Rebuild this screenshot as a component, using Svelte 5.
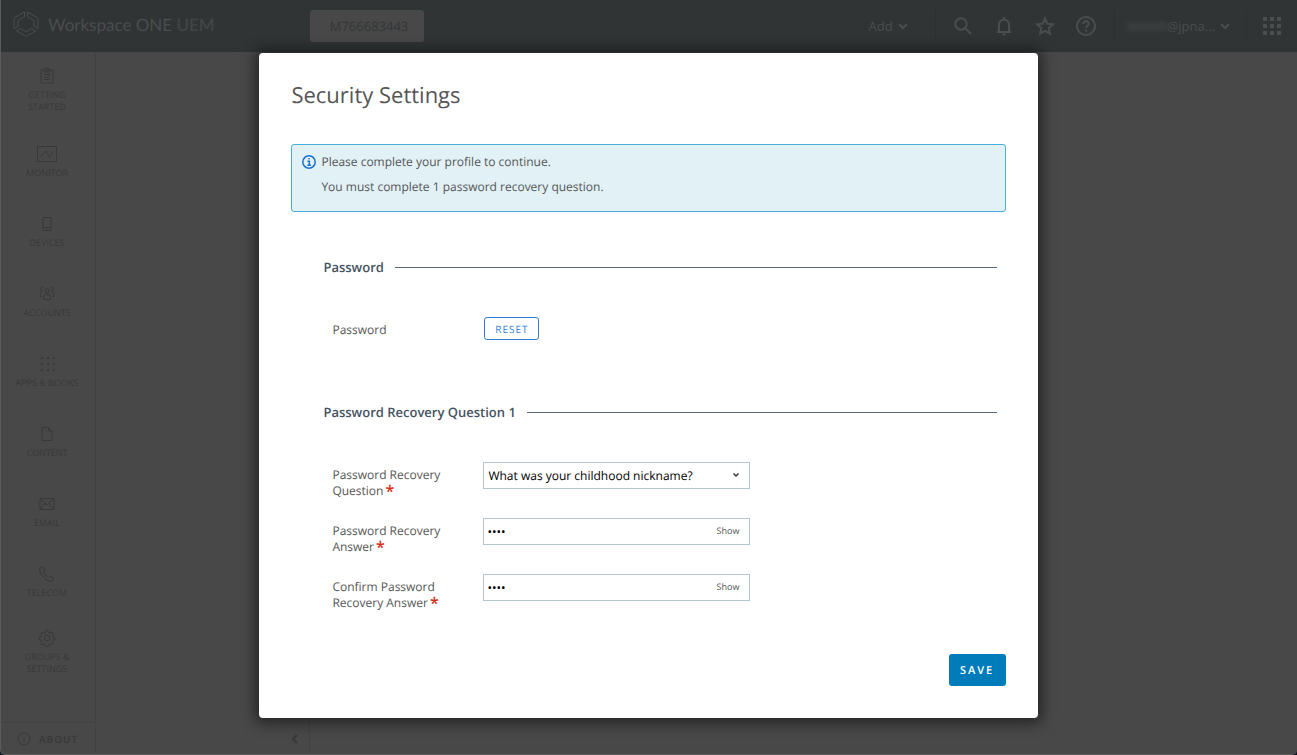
<script lang="ts">
    const navItems = [
        { label: "Getting Started", icon: "clipboard" },
        { label: "Monitor", icon: "monitor" },
        { label: "Devices", icon: "device" },
        { label: "Accounts", icon: "accounts" },
        { label: "Apps & Books", icon: "grid" },
        { label: "Content", icon: "page" },
        { label: "Email", icon: "mail" },
        { label: "Telecom", icon: "phone" },
        { label: "Groups & Settings", icon: "gear" },
    ];

    const dots = [3, 9, 15];

    let question = $state("nickname");
    let answers = $state([
        { id: "answer", label: "Password Recovery Answer", value: "abcd", visible: false },
        { id: "confirm", label: "Confirm Password Recovery Answer", value: "abcd", visible: false },
    ]);
</script>

<div class="app">
    <header class="topbar">
        <a class="brand" href="#home">
            <svg width="26" height="26" viewBox="0 0 26 26">
                <path d="M11.500 1 2 6.400q-1 .6-1 1.600v9.500l4-2.300V9.600l6.500-3.800ZM14.500 1 24 6.400q1 .6 1 1.600v9.500l-4-2.300V9.600l-6.500-3.800ZM3.500 20l4.200-2.400 5.300 3 5.300-3 4.200 2.400-8.700 5q-.8.500-1.600 0Z" />
            </svg>
            <span>Workspace ONE <b>UEM</b></span>
        </a>
        <button class="org">M766683443</button>

        <div class="tools">
            <button class="add">
                Add
                <svg width="10" height="10" viewBox="0 0 10 10"><path d="m1 3 4 4 4-4" /></svg>
            </button>
            <div class="icons">
                <button aria-label="Search">
                    <svg width="20" height="20" viewBox="0 0 20 20"><circle cx="8" cy="8" r="5.700" /><path d="m12 12 6 6" /></svg>
                </button>
                <button aria-label="Notifications">
                    <svg width="20" height="20" viewBox="0 0 20 20"><path d="M3 16h14M5 16V9q0-5 5-5.500Q15 4 15 9v7M10 1v2.500M8.500 18.500h3" /></svg>
                </button>
                <button aria-label="Favorites">
                    <svg width="20" height="20" viewBox="0 0 20 20"><path d="m10 2.500 2.300 5.200 5.700.6-4.300 3.800 1.200 5.600-4.900-2.900-4.900 2.900 1.200-5.600L2 8.300l5.700-.6Z" /></svg>
                </button>
                <button aria-label="Help">
                    <svg width="20" height="20" viewBox="0 0 20 20"><circle cx="10" cy="10" r="9" /><path d="M7.300 8q0-2.800 2.700-2.800T12.700 7.800q0 1.200-1.400 2.100T10 12M10 13.500v2" /></svg>
                </button>
            </div>
            <button class="user">
                <span class="masked"></span>@jpna...
                <svg width="10" height="10" viewBox="0 0 10 10"><path d="m1 3 4 4 4-4" /></svg>
            </button>
            <button class="launcher" aria-label="Applications">
                <svg width="18" height="18" viewBox="0 0 18 18">
                    {#each [0, 7, 14] as y}
                        {#each [0, 7, 14] as x}
                            <rect {x} {y} width="4" height="4" />
                        {/each}
                    {/each}
                </svg>
            </button>
        </div>
    </header>

    <div class="body">
        <nav class="sidebar">
            <div class="items">
                {#each navItems as item}
                    <a class="item" href="#{item.icon}">
                        <svg width="20" height="20" viewBox="0 0 20 20">
                            {#if item.icon === "clipboard"}
                                <path d="M4 4h12v13H4ZM7 4V6h6V4M8 4q0-2 2-2t2 2M7 8.500h6M7 11h6M7 13.500h6" />
                            {:else if item.icon === "monitor"}
                                <path d="M.5 2.500h19v15H.5ZM3.500 12l2-1 3-4 4 6 4-6" />
                            {:else if item.icon === "device"}
                                <path d="M6 3.500h8v13H6ZM6 13.500h8M10 14v2" />
                            {:else if item.icon === "accounts"}
                                <circle cx="10" cy="7" r="2.200" />
                                <path d="M6.500 15.500V13q0-2.500 3.500-2.500t3.500 2.500v2.500ZM7 4Q3.500 2.500 4 6q0 1 1 2-2 .5-2 4.500h2M13 4q3.500-1.500 3 2 0 1-1 2 2 .5 2 4.500h-2" />
                            {:else if item.icon === "grid"}
                                {#each dots as y}
                                    {#each dots as x}
                                        <path class="dot" d="M{x} {y + 2}h3V{y - 1}Z" />
                                    {/each}
                                {/each}
                            {:else if item.icon === "page"}
                                <path d="M5 3.500h6.500L15 7v9.500H5ZM11.500 3.500V7H15" />
                            {:else if item.icon === "mail"}
                                <path d="M3 4.500h14v11H3ZM3 4.500l7 6.500 7-6.500M3 15.500 8 9.500M17 15.500l-5-6" />
                            {:else if item.icon === "phone"}
                                <path d="M3 4q1.500-2 3-1l1.700 3q.3 1-1.200 2 1.500 4 5 5.500 1.200-1.500 2.200-1l3 1.700q.8 1-.7 2.300-2 2-6-.5T3.600 9.500Q2 6 3 4Z" />
                            {:else}
                                <circle cx="10" cy="10" r="2.800" />
                                <path d="m8.500 3 .5-.5h2l.6 2 1.400.6 1.900-1 1.500 1.500-1 1.900.6 1.400 2 .6v2l-2 .6-.6 1.400 1 1.900-1.500 1.500-1.900-1-1.400.6-.6 2H9l-.6-2-1.400-.6-1.900 1-1.500-1.500 1-1.900-.6-1.400-2-.6v-2l2-.6.6-1.400-1-1.900 1.500-1.500 1.900 1 1.400-.6Z" />
                            {/if}
                        </svg>
                        <span>{item.label}</span>
                    </a>
                {/each}
            </div>
            <a class="about" href="#about">
                <svg width="14" height="14" viewBox="0 0 14 14"><circle cx="7" cy="7" r="6" /><path d="M7 6v4M7 3.500v1" /></svg>
                About
            </a>
        </nav>
        <aside class="subnav">
            <button aria-label="Collapse menu">
                <svg width="10" height="10" viewBox="0 0 10 10"><path d="M7 1 3 5l4 4" /></svg>
            </button>
        </aside>
    </div>
</div>

<div class="overlay">
    <div class="modal" role="dialog" aria-modal="true" aria-labelledby="modal-title">
        <h1 id="modal-title">Security Settings</h1>

        <div class="notice">
            <svg width="14" height="14" viewBox="0 0 14 14">
                <circle cx="7" cy="7" r="6.200" />
                <path d="M5.500 6.200H7.300V10M5.300 10.200h3.600M6.300 3.800h1.400" />
            </svg>
            <div>
                <p>Please complete your profile to continue.</p>
                <p>You must complete 1 password recovery question.</p>
            </div>
        </div>

        <section>
            <h2>Password</h2>
            <div class="row reset-row">
                <span class="label">Password</span>
                <button class="reset">RESET</button>
            </div>
        </section>

        <section>
            <h2>Password Recovery Question 1</h2>
            <div class="row">
                <label class="label" for="question">Password Recovery Question<em>*</em></label>
                <div class="field">
                    <select id="question" bind:value={question}>
                        <option value="nickname">What was your childhood nickname?</option>
                    </select>
                    <svg class="caret" width="8" height="8" viewBox="0 0 8 8"><path d="m1.500 2.500 2.500 2.500 2.500-2.500" /></svg>
                </div>
            </div>
            {#each answers as answer}
                <div class="row">
                    <label class="label" for={answer.id}>{answer.label}<em>*</em></label>
                    <div class="field">
                        <input id={answer.id} type={answer.visible ? "text" : "password"} value={answer.value} />
                        <button class="show" onclick={() => (answer.visible = !answer.visible)}>
                            {answer.visible ? "Hide" : "Show"}
                        </button>
                    </div>
                </div>
            {/each}
        </section>

        <footer>
            <button class="save">SAVE</button>
        </footer>
    </div>
</div>

<style>
    :global(body) {
        margin: 0;
        background: #10131c;
        font-family: "Open Sans", "Noto Sans", sans-serif;
        text-rendering: geometricPrecision;
    }

    * {
        box-sizing: border-box;
    }

    button {
        padding: 0;
        border: 0;
        background: none;
        color: inherit;
        font: inherit;
        text-rendering: inherit;
    }

    a {
        color: inherit;
        text-decoration: none;
    }

    svg {
        flex-shrink: 0;
        fill: none;
        stroke: currentColor;
    }

    .app {
        display: flex;
        flex-direction: column;
        min-height: 100vh;
        border-left: 1px solid #5c5c5c;
        border-bottom: 1px solid #5c5c5c;
        border-radius: 0 0 5px 5px;
        background: #484848;
        color: #383838;
        overflow: hidden;
    }

    .topbar {
        display: flex;
        align-items: center;
        height: 52px;
        background: #303435;
        color: #4b4d4e;
        font-size: 13px;
    }

    .brand {
        display: flex;
        align-items: center;
        gap: 9px;
        width: 309px;
        padding: 0 0 4px 12px;
        font-family: Lato, "Open Sans", sans-serif;
        font-size: 17px;
    }

    .brand b {
        font-weight: 600;
        color: #424546;
    }

    .org {
        width: 114px;
        height: 32px;
        padding-left: 4px;
        border-radius: 3px;
        background: #484848;
        color: #333637;
    }

    .tools {
        display: flex;
        align-items: center;
        height: 34px;
        margin-left: auto;
    }

    .tools svg {
        display: block;
        stroke-width: 2;
    }

    .add,
    .user {
        display: flex;
        align-items: center;
        gap: 5px;
    }

    .add {
        padding-right: 27px;
    }

    .icons {
        display: flex;
        align-items: center;
        gap: 21px;
        height: 100%;
        padding: 0 18px 0 17px;
        border: 1px solid #2c3031;
        border-width: 0 1px;
    }

    .user {
        height: 100%;
        padding: 0 16px 0 12px;
        border-right: 1px solid #2c3031;
    }

    .masked {
        width: 40px;
        height: 9px;
        margin-right: -5px;
        background: #3a3e3f;
        filter: blur(2px);
    }

    .launcher {
        padding: 0 16px;
    }

    .launcher svg {
        fill: currentColor;
        stroke: none;
    }

    .body {
        display: flex;
        flex: 1;
    }

    .sidebar {
        display: flex;
        flex-direction: column;
        width: 95px;
        border-right: 1px solid #424242;
    }

    .items {
        flex: 1;
    }

    .item {
        display: flex;
        flex-direction: column;
        align-items: center;
        justify-content: center;
        gap: 3px;
        height: 70px;
        padding: 0 15px 0 13px;
        font-size: 9px;
        line-height: 12px;
        text-align: center;
        text-transform: uppercase;
    }

    .item:first-child {
        height: 74px;
    }

    .item span {
        max-width: 64px;
    }

    .dot {
        fill: currentColor;
        stroke: none;
    }

    .about {
        display: flex;
        align-items: center;
        gap: 8px;
        height: 32px;
        padding-left: 16px;
        border-top: 1px solid #424242;
        font-size: 10px;
        font-weight: 600;
        letter-spacing: 1px;
        text-transform: uppercase;
    }

    .subnav {
        display: flex;
        align-items: flex-end;
        justify-content: flex-end;
        width: 214px;
        padding: 0 9px 10px;
        border-right: 1px solid #424242;
    }

    .subnav svg {
        display: block;
        stroke-width: 2;
    }

    .overlay {
        position: absolute;
        inset: 0;
        display: flex;
        align-items: flex-start;
        justify-content: center;
        padding-top: 53px;
    }

    .modal {
        width: 60%;
        min-width: 640px;
        padding: 28px 32px 32px;
        border-radius: 4px;
        background: #fff;
        box-shadow: 0 1px 14px 4px rgba(0, 0, 0, 0.5);
        color: #565656;
        font-size: 12px;
    }

    h1 {
        margin: 0 0 35px;
        font-size: 22px;
        font-weight: 400;
        line-height: 28px;
    }

    .notice {
        display: flex;
        gap: 5px;
        height: 68px;
        padding: 9px 10px;
        border: 1px solid #49afd9;
        border-radius: 3px;
        background: #e1f1f6;
    }

    .notice svg {
        margin-top: 1px;
        color: #1a73d1;
        stroke-width: 1.5;
    }

    .notice p {
        margin: 0 0 9px;
        line-height: 16px;
    }

    section {
        margin: 0 9px 0 32px;
        padding-top: 45px;
    }

    section + section {
        padding-top: 55px;
    }

    h2 {
        display: flex;
        align-items: center;
        gap: 11px;
        margin: 0 0 40px;
        color: #45535f;
        font-size: 13px;
        font-weight: 600;
        line-height: 20px;
    }

    h2::after {
        flex: 1;
        height: 1px;
        background: #5a6873;
        content: "";
    }

    .row {
        display: flex;
        align-items: flex-start;
        height: 56px;
        padding-left: 9px;
    }

    .reset-row {
        height: 30px;
    }

    .label {
        width: 151px;
        padding: 5px 30px 0 0;
        line-height: 16px;
    }

    .label em {
        margin-left: 2px;
        color: #d9301a;
        font-size: 16px;
        font-style: normal;
        font-weight: 600;
        line-height: 8px;
        vertical-align: -2px;
    }

    .reset {
        width: 55px;
        height: 23px;
        margin-left: 1px;
        border: 1px solid #2f80d8;
        border-radius: 3px;
        color: #2f80d8;
        font-size: 10px;
        letter-spacing: 1px;
    }

    .field {
        position: relative;
        width: 267px;
    }

    select,
    input {
        display: block;
        width: 100%;
        height: 27px;
        border: 1px solid #b3c5d1;
        border-radius: 0;
        background: #fff;
        color: #000;
        font: inherit;
        text-rendering: inherit;
        appearance: none;
    }

    select {
        padding: 0 24px 0 4px;
    }

    input {
        padding: 0 50px 0 3px;
    }

    .caret {
        position: absolute;
        top: 9px;
        right: 10px;
        color: #333;
        stroke-width: 1.5;
        pointer-events: none;
    }

    .show {
        position: absolute;
        top: 6px;
        right: 11px;
        color: #565656;
        font-size: 9px;
        line-height: 14px;
    }

    footer {
        display: flex;
        justify-content: flex-end;
        padding-top: 24px;
    }

    .save {
        width: 57px;
        height: 32px;
        border-radius: 3px;
        background: #007cbb;
        color: #fff;
        font-size: 11px;
        font-weight: 600;
        letter-spacing: 2px;
    }
</style>
